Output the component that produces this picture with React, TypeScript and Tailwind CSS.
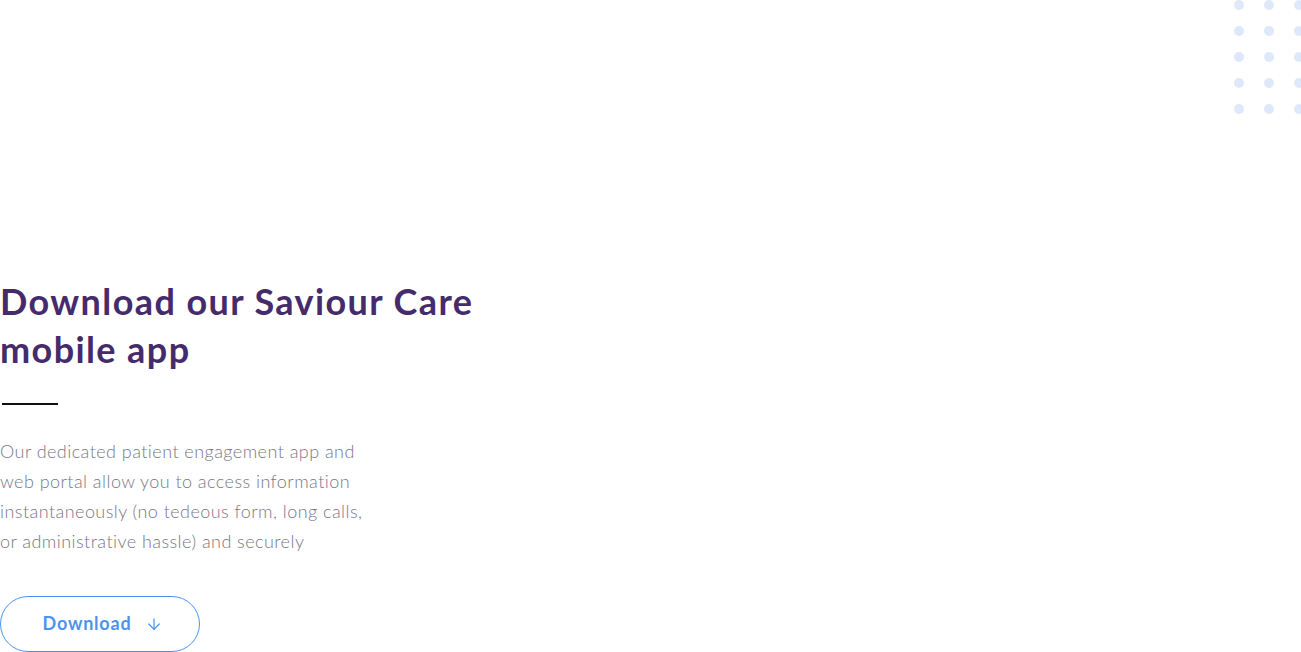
import { ArrowDown } from 'lucide-react';

const DotGrid = () => {
  const rows = [0, 1, 2, 3, 4];
  const cols = [0, 1, 2];
  return (
    <div className="absolute top-0 right-0 flex flex-col gap-[16px] translate-x-[3px]">
      {rows.map((r) => (
        <div key={r} className="flex gap-[20px]">
          {cols.map((c) => (
            <span key={c} className="block w-[10px] h-[10px] rounded-full bg-[#dde9fb]" />
          ))}
        </div>
      ))}
    </div>
  );
};

const App = () => {
  return (
    <section
      className="relative w-[1301px] h-[652px] overflow-hidden bg-white"
      style={{ fontFamily: 'Lato, "Noto Sans", sans-serif' }}
    >
      <DotGrid />

      <div className="flex flex-col pt-[277px]">
        <h2 className="text-[36px] leading-[48px] font-bold tracking-[1.4px] text-[#452b6b] w-[520px]">
          Download our Saviour Care mobile app
        </h2>

        <div className="mt-[30px] ml-[2px] w-[56px] h-[2px] bg-[#111]" />

        <p className="mt-[31px] w-[368px] text-[18px] leading-[30px] font-light tracking-[0.45px] text-[#777784]">
          Our dedicated patient engagement app and web portal allow you to access information
          instantaneously (no tedeous form, long calls, or administrative hassle) and securely
        </p>

        <button className="mt-[40px] w-[200px] h-[56px] pl-[6px] pb-[1px] rounded-full border border-[#4d93ee] flex items-center justify-center gap-[14px] text-[#4d93ee] text-[18px] font-bold tracking-[0.8px]">
          <span>Download</span>
          <ArrowDown className="w-[18px] h-[18px]" strokeWidth={1.6} />
        </button>
      </div>
    </section>
  );
};

export default App;
